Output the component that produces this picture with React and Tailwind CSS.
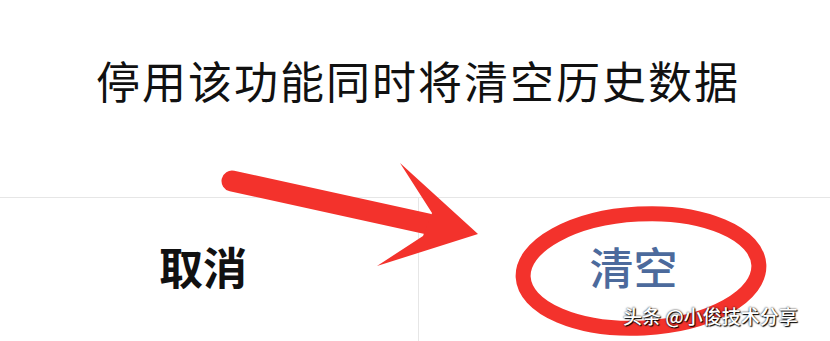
import React from 'react';

const Arrow = () => (
  <svg className="absolute inset-0 pointer-events-none" width="830" height="341" viewBox="0 0 830 341">
    <line x1="232" y1="181" x2="428" y2="224" stroke="#f3322c" strokeWidth="21" strokeLinecap="round" />
    <polygon points="400,163 478,234 377,266 423,236 432,213" fill="#f3322c" />
    <ellipse
      cx="641"
      cy="271"
      rx="118"
      ry="57"
      fill="none"
      stroke="#f3322c"
      strokeWidth="15"
      transform="rotate(-3 641 271)"
    />
  </svg>
);

export default function App() {
  return (
    <div
      className="relative w-[830px] h-[341px] bg-white overflow-hidden"
      style={{ fontFamily: '"Noto Sans CJK SC", "Noto Sans", sans-serif' }}
    >
      <div className="h-[197px] flex items-center justify-center pb-[38px]">
        <p className="text-[44px] leading-none tracking-[2px] text-[#111] pl-[6px]">停用该功能同时将清空历史数据</p>
      </div>
      <div className="grid grid-cols-[419px_1fr] h-[144px] border-t border-[#e6e6e6]">
        <button className="flex items-center justify-center pr-[12px] pb-[8px] border-r border-[#e6e6e6]">
          <span className="text-[44px] leading-none font-bold text-[#111]">取消</span>
        </button>
        <button className="flex items-center justify-center pl-[18px] pb-[8px]">
          <span className="text-[44px] leading-none font-medium text-[#4c6a9c]">清空</span>
        </button>
      </div>
      <Arrow />
      <span className="absolute left-[623px] top-[306px] text-[19px] leading-none font-medium text-white [text-shadow:0_0_2px_#000,1px_1px_1px_#000]">
        头条 @小俊技术分享
      </span>
    </div>
  );
}
